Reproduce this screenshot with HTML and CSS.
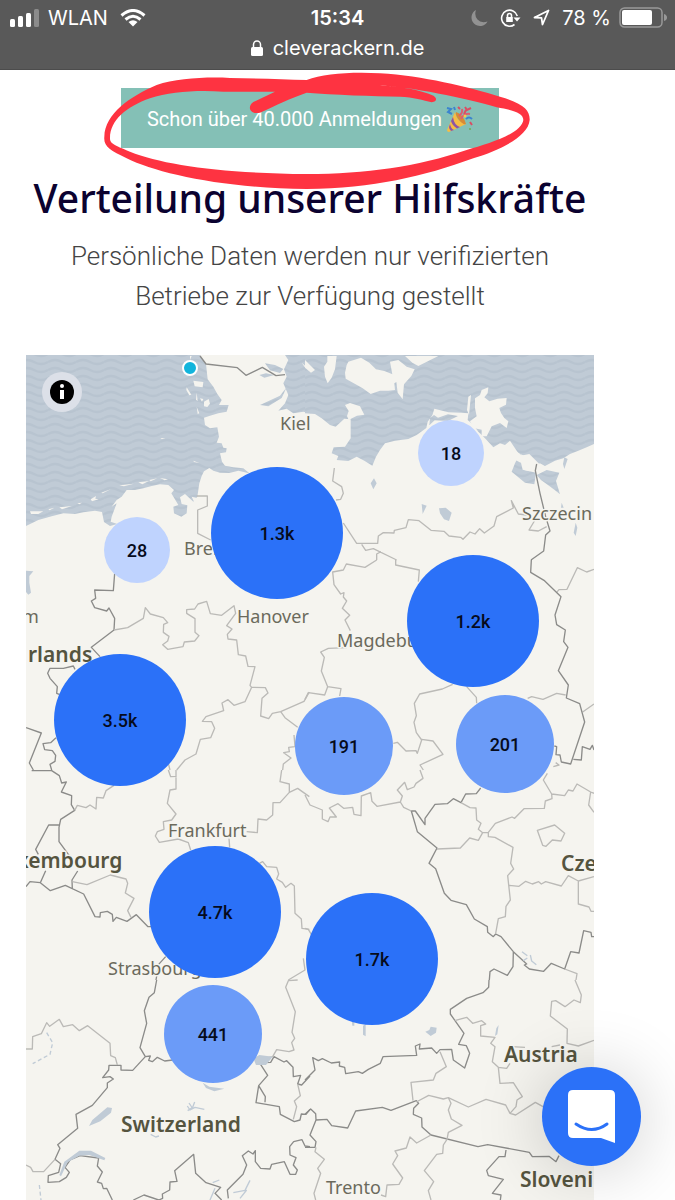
FILE: index.html
```html
<!doctype html>
<html lang="de">
  <head>
    <meta charset="UTF-8" />
    <meta name="viewport" content="width=device-width, initial-scale=1.0" />
    <title>cleverackern.de</title>
    <link rel="stylesheet" href="styles.css">
  </head>
  <body>
    <header class="phone-bar">
      <div class="status">
        <div class="status-left">
          <svg width="30" height="18" viewBox="0 0 30 18" fill="#fff">
            <rect x="0" y="10" width="5" height="8" rx="1.5" />
            <rect x="8" y="7" width="5" height="11" rx="1.5" />
            <rect x="16" y="4" width="5" height="14" rx="1.5" />
            <rect x="24" y="0" width="5" height="18" rx="1.5" opacity=".3" />
          </svg>
          <span>WLAN</span>
          <svg class="wifi" width="26" height="18" viewBox="0 0 26 18" fill="none" stroke="#fff" stroke-width="3">
            <path d="M1.5 6.5Q13-3.500 24.500 6.500M5.500 10.500Q13 4 20.500 10.500" />
            <path d="M8.500 13Q13 9.500 17.500 13L13 17.500z" fill="#fff" stroke="none" />
          </svg>
        </div>
        <span class="clock">15:34</span>
        <div class="status-right">
          <svg width="17" height="18" viewBox="0 0 17 18" fill="#929292">
            <path d="M5 1A8.500 8.500 0 1 0 16.500 12.500Q10 14.500 6.500 10.500T5 1z" />
          </svg>
          <svg class="lock-icon" width="21" height="20" viewBox="0 0 21 20" fill="none" stroke="#fff" stroke-width="1.600">
            <path d="M14.500 16.500A8 8 0 1 1 17.300 8" />
            <path d="M13.500 9.500h7l-3.500 4z" fill="#fff" stroke="none" />
            <path d="M6.200 9h6.600v5H6.200z" fill="#fff" stroke="none" />
            <path d="M7.500 9V7.500a2 2 0 0 1 4 0V9" />
          </svg>
          <svg class="arrow-icon" width="17" height="17" viewBox="0 0 17 17" fill="none" stroke="#fff" stroke-width="1.800" stroke-linejoin="round">
            <path d="M1.500 8.500 15.500 1.500 9.500 15.500 8.500 8.800z" />
          </svg>
          <span>78 %</span>
          <svg class="battery" width="48" height="21" viewBox="0 0 48 21">
            <rect x="1" y="1" width="42" height="19" rx="4.500" fill="none" stroke="#999" stroke-width="1.500" />
            <rect x="3" y="3" width="30" height="15" rx="2" fill="#fff" />
            <path d="M45 7v7q3-1 3-3.500T45 7z" fill="#999" />
          </svg>
        </div>
      </div>
      <div class="address">
        <svg width="12" height="16" viewBox="0 0 12 16">
          <rect y="7" width="12" height="9" rx="1.500" fill="#fff" />
          <path d="M2.500 8V4.500a3.500 3.500 0 0 1 7 0V8" fill="none" stroke="#fff" stroke-width="1.500" />
        </svg>
        <span>cleverackern.de</span>
      </div>
    </header>

    <main>
      <a class="banner" href="#karte">
        <span>Schon über 40.000 Anmeldungen</span>
        <svg width="27" height="27" viewBox="0 0 27 27">
          <path d="M9 6 1 24q0 2 2 2l17-8Q11 16 9 6z" fill="#f6bd45" />
          <path d="M7 11q1 8 7 10l-3 1.500Q6 19 5 15zM4 18q1 5 4 6l-3 1q-2-2-2-4z" fill="#8d55a5" />
          <path d="M10 6q7 2 10 12-3 1-7-4T10 6z" fill="#d88b35" />
          <path d="M13 10q4-3 3-7M15 13q3-6 9-5" fill="none" stroke="#dd5c72" stroke-width="2" />
          <path d="M1 2l4 1-3 3 4 2M20 13q3-3 6 0M8 1l1 3" fill="none" stroke="#3b84cf" stroke-width="2" />
          <path d="M12 1l2 2M19 1l2 3 4-2M24 16l2 3M20 4l-2 4" fill="none" stroke="#d94e64" stroke-width="2" />
          <circle cx="19" cy="10" r="1.500" fill="#f4cf4c" />
          <circle cx="24" cy="23" r="1" fill="#70ad55" />
        </svg>
        <svg class="scribble" width="450" height="150" viewBox="0 0 1350 450">
          <path fill="#fe3341" fill-rule="evenodd" d="M43 200C45 130 120 80 200 45C260 25 350 20 420 24C500 25 580 28 650 30C700 12 780 5 870 10C1000 18 1130 50 1230 80C1300 100 1320 120 1319 150C1315 200 1230 240 1150 265C1000 320 850 355 650 357C400 355 200 310 110 265C60 240 40 230 43 200z
            M60 205C60 150 110 110 180 85C240 65 320 60 400 65L555 65L490 96C470 110 480 135 510 128C560 105 600 85 650 68C730 75 850 78 930 80C970 82 1000 90 1025 97C1045 95 1040 80 1025 75C980 55 900 47 860 45C960 50 1130 85 1220 112C1270 120 1300 130 1300 150C1295 190 1200 220 1130 240C980 290 830 312 650 312C400 310 220 285 120 245C70 225 60 220 60 205z" />
        </svg>
      </a>
      <h1>Verteilung unserer Hilfskräfte</h1>
      <p class="subtitle">Persönliche Daten werden nur verifizierten Betriebe zur Verfügung gestellt</p>

      <section class="map" id="karte">
        <svg class="map-base" width="568" height="845" viewBox="0 0 568 845">
          <defs>
            <pattern id="waves" width="84" height="24" patternUnits="userSpaceOnUse">
              <rect width="84" height="24" fill="#c0cbd6" />
              <path d="M0 12Q21 0 42 12T84 12" fill="none" stroke="#b8c4d0" stroke-width="7" />
            </pattern>
          </defs>

          <!-- north sea, schleswig-holstein -->
          <g transform="translate(-6 -5) scale(.333333)">
            <path class="sea" d="M18 15H540L558 42 563 88 580 110 592 132 605 150 597 165 626 165 620 185 595 190 570 197 552 203 555 225 570 235 592 232 597 260 590 278 605 280 610 293 620 295 618 307 600 310 606 335 615 347 640 352 670 355 688 370 655 362 628 369 600 368 580 362 568 354 552 364 545 378 538 400 532 440 520 455 495 432 480 442 485 462 502 466 500 490 484 500 462 490 460 470 475 465 454 430 462 420 445 405 420 403 395 408 370 415 345 420 320 420 305 440 290 450 275 470 290 460 275 500 272 515 292 522 270 528 252 516 246 486 225 482 190 487 165 492 130 490 95 499 55 510 18 528z" />
            <path class="sea" d="M795 15H873V190L850 185 820 190 800 176 775 182 795 160 805 135 790 100 800 80 792 58 805 30z" />
            <path class="sea" d="M735 40l30 5 25 12-10 12-30-8zM738 70l25 5-30 8-15-8zM720 165l60-28 20-25-15 32-40 25z" />
            <path class="land" d="M520 92l30 4-2 16-24-3zM500 112l14 22-6 2-9-16zM530 128l3 25-5-4zM552 155l14-8 4 14-8 10-10-2zM540 145l10 2-4 8zM530 170l8 20-5 2zM510 18l5 0-5 12zM845 38l25 22-8 2zM30 484l40 0-15 8-22 0zM85 478l18-5-14 8zM118 472l38-4-30 10zM172 460l14-2-8 5zM212 448l16-10-2 8 10 2-20 6zM244 428l28-10-24 12zM298 406l44-5-30 8zM355 397l32-4-20 10zM388 390l24-5-20 9zM420 384l24 4-10 3zM520 332l18 7-16-3zM421 264l15 0-10 3zM515 440l20 5 10 15-8 12-14-15z" />
            <path class="border" d="M540 18L558 42 652 53 678 76 727 52 768 77 795 74" />
            <path class="state" d="M530 438H562V468L533 480V550L572 570" />
          </g>

          <!-- baltic coast -->
          <g transform="translate(279 -5) scale(.333333)">
            <path class="sea" d="M0 15H867V282L845 292 820 302 795 312 775 325 750 332 720 348 705 340 690 345 665 320 640 310 615 272 600 285 585 280 565 292 540 265 520 245 505 225 488 210 490 190 470 188 430 187 388 176 382 196 368 215 364 234 335 255 310 267 270 272 240 280 225 300 213 320 202 347 178 332 155 320 130 333 95 330 100 318 80 310 86 292 120 290 137 265 137 208 118 206 92 230 75 225 50 205 30 192 0 190z" />
            <path class="land" d="M125 45l5-10 38-12 25 15 20 20 25 5 30 12 25-10-10 25-15 10 2 20-20 2-25 0-28 10-25-18-50-28-2-18zM255 35l25-5 25 20 24 8-10 20-22 25-4 45-15-20-5-40-10-10zM95 18l-5 40-10 25-12 17-8-20-3-30 10-15 0-17zM300 18h100l-60 30-18-10zM0 30l30 30-12 8-18-15zM120 165l15-6 30 10 13 25-22 3-15 8-10 5-5-12 5-15zM510 145l15-10 5-15 20-8-2 18-10 12 15 12 25-8 27-2-2 20-20 10 5 15 10 15 12 10-5 20-20-15-25 10-15 30-15 0 0-20-25-5-10-20 20-15-5-25zM490 140l8-5-6 60-6-15z" />
            <path class="sea" d="M620 365l10-25 15-30 18 30-5 20 35 8-5 35-28-5zM695 375l30-15 38 8-10 25 12 40-12-10-20-15-25-18zM375 205l12-10 12 8 30-10 30 5-30 15-40-2-16 15z" />
            <path class="lake-area" d="M778 322l10 5-10 30-4-15zM197 400l10-15 8 15-10 18zM350 462l15 5-12 25zM402 475l20-2 18 15-8 25-15-5-12-18zM770 458l6 15-8 0zM812 518l5 15-5 25-6-10z" />
            <path class="land" d="M630 300l25 20-8 18-20-10zM643 318l30-6 30 30-30 22-20-5z" />
            <path class="state" d="M88 354L83 393 110 410 115 430 107 448 93 450M115 519L155 580H218L220 558 235 548 267 549 268 541 303 533 310 509 342 512 378 541 417 544 432 558 467 562 474 568 495 546 510 552 524 536 538 549 567 528 575 500 625 474 619 452 640 492 665 495M690 510L672 540 700 543 725 530M170 583L182 601 205 596 275 630M215 630L215 612 228 605" />
            <path class="border" d="M695 342L691 362 705 430 722 500 735 543 722 555 716 603 678 630" />
          </g>

          <!-- netherlands, nrw, hanover -->
          <g transform="translate(-6 205) scale(.333333)">
            <path class="lake-area" d="M18 32l22 2-12 14 0 20 5 30-8 6-7-8z" />
            <path class="border" d="M284 40L280 92 224 90 227 115 214 123 224 143 260 153 267 144 284 175 282 210 214 262 240 290M165 328L160 318 130 325 90 325 83 340 90 355 112 380 110 400 118 403M18 503L64 519 28 609 40 630M108 533L92 548 69 551 74 569 97 572 107 586 105 604 90 613 95 630" />
            <path class="state" d="M282 210L323 203 370 175 376 143 391 162 430 173 443 188 431 193 430 217 447 229 443 243 428 254 443 268 489 260 493 246 524 243 537 227 525 217 525 176 500 160 500 149 524 147 534 132 560 124 571 161 605 166 642 137 647 160 620 197 636 207 622 223 624 237 650 240 655 284 677 288 684 319 705 320 690 376 695 382 736 383 744 399 726 415 722 468 746 476 757 460 782 455 795 473 833 502M695 382L675 425 642 436 624 419 606 429 611 452 558 470 547 484 575 485 584 505 572 533 541 538 528 582 495 600 470 630M782 455L852 424 868 396M445 610L450 630M822 525L825 560 806 562 808 575 791 578 813 594 790 612 788 630" />
          </g>

          <!-- magdeburg, leipzig, polish border -->
          <g transform="translate(279 205) scale(.333333)">
            <path class="state" d="M215 0L180 22 124 12 115 30 83 36 87 74 107 102 117 98 115 111 125 123 112 145 134 166 120 180 136 212M272 0V15L343 30 340 65M125 263L70 265 47 276 58 292 49 333 68 380 59 405 10 398 0 418M68 380L108 386 104 408M443 373L412 387 344 402 328 430 334 467 327 487 334 518 350 540 337 580 333 572 303 573 277 547 265 550M350 538L384 543 414 583 345 615 355 630M485 380L514 412 515 430M668 415L680 410 714 418 755 400 782 405M755 97L762 89 786 88 817 23 845 36 867 28M833 456L867 432M752 608L762 615 745 620" />
            <path class="border" d="M679 0L677 37 717 61 768 110 750 165 755 194 781 210 776 245 789 262 760 332 790 375 784 414 824 431 839 486 797 612 769 606 765 585 753 584 755 560 748 558M805 598L829 600 832 560 855 568 862 556 867 570" />
          </g>

          <!-- luxembourg, frankfurt, strasbourg -->
          <g transform="translate(-6 415) scale(.333333)">
            <path class="border" d="M35 2H95L118 17 125 39 139 36 124 66 155 77 154 104 164 121 122 148 117 172 117 215 150 260M117 165H86L47 238 55 253M77 302L61 338 30 335 18 350M61 338L91 362 136 346 191 372 225 440 240 441 241 428 262 424 277 433 279 454 289 442 321 454 349 434 384 470 393 470M173 303L156 330 157 358M437 560L416 583 408 630" />
            <path class="state" d="M164 121L172 106 198 113 210 105 228 117 230 82 250 84 258 62 282 46M445 0L452 20 470 19M468 0V57L450 60 442 100 468 132 455 150 430 155 432 178 412 185 406 198 418 217 475 207 505 218 512 240M627 205L629 232M157 335L201 344 271 315 318 327 323 340 316 369 342 385 323 422 333 442M785 0L780 35 808 42V67L833 55 868 80M808 67L780 98 759 98 758 135 740 150 714 147 712 188 680 185M718 280L728 275 740 290 770 292 776 312 770 327 787 337 797 352 813 340 823 348 825 430 844 447 846 475 868 478M850 565L855 600 805 630" />
          </g>

          <!-- bohemia -->
          <g transform="translate(279 415) scale(.333333)">
            <path class="border" d="M527 54L514 71 482 72 468 98 445 86 427 101 390 103 360 145 360 164 331 123H319L337 185 396 234 372 280 392 296 418 370 438 391 484 404 508 447 547 470 548 487 565 500 572 492 588 500 625 545 665 582 658 585 673 597 716 604 739 580 779 597 797 545 822 549 836 482 858 487 860 500 867 500M625 545L624 590 607 616 567 597 555 605 553 630" />
            <path class="state" d="M345 0L354 25 333 40 327 51 307 59 299 37 277 60 292 78 286 96 216 109 201 94 197 68 169 78 168 137 147 133 143 112 116 115 99 101 73 114 94 141H75L69 155 52 147V120L15 105 0 75M286 96L296 112 319 123M468 98L495 113 513 114 515 150 528 160 520 178 533 188 520 211 494 204 466 234 396 237M533 188L550 187 571 160 621 141 629 145 657 116 718 115 721 93 741 86 740 72 779 77 790 60 804 63 816 42 857 66 867 70M740 72L715 30 727 10M857 66L851 105 867 127M697 181L749 165 779 190 768 213 742 210 723 229 713 226zM550 187V200L570 202 624 232 617 280 626 297 608 317 616 390 603 409 601 440 580 446 572 490M613 346L642 349 662 334 682 342 701 335 709 342 722 335 769 348 790 317 820 333 867 320M820 333V402L852 411 858 424H867M779 597L816 611 813 630M0 475L10 478 20 495" />
            <path class="lake" d="M651 545l16 12M655 572l12-8M676 555l4 18 14 11" />
          </g>

          <!-- switzerland -->
          <g transform="translate(-6 625) scale(.333333)">
            <path class="border" d="M410 0L403 38 387 52 373 92 380 130 360 203 376 230 338 271 303 270V256H267L266 270 248 293 270 290 280 297 262 309V323L217 376 168 403 173 445 113 494 120 505 105 538 122 551 116 577 85 587 84 607 118 605 139 592 148 577 135 562 150 540 180 527 236 534 232 558 247 576 232 606 245 610 250 626 260 625 277 660M376 230L391 228 386 241 397 245 412 232 434 243 458 240M710 235L743 286 716 317 708 368 778 380 781 403 823 425 840 420 844 402 858 403 870 388M716 317L736 350 735 367M730 248L752 247 762 230 792 246 800 242 819 262 820 290 842 286 833 312 845 315 870 288M340 660L372 645 416 660 428 655 427 642 449 630 450 606 471 604 464 572 521 523 527 580 558 608 602 622 585 640 605 660M625 655L622 630 669 583 680 555 667 527 685 513 699 522 706 512V545L722 565 750 567 755 553 793 545 810 583H827L832 570 820 555 828 533 810 525 809 500 821 485 846 479 855 498 870 500" />
            <path class="state" d="M18 207H37L38 170 64 161 80 128 89 139 118 118 130 140 158 134 178 152 203 137 270 190 272 227 286 233 292 255M18 555L32 562 39 575H71L105 538M833 0L805 2 797 22 826 95 816 157 824 175 815 188 822 210 807 215 770 209 758 230 722 237M833 312L841 347 823 363 830 380 820 418" />
            <path class="lake-area" d="M207 438l10-18 45-38 14 2-3 14-32 26zM118 585l15-40 45-33 35 0 43 22-3 7-45-16-30 2-35 20-20 42zM700 235l18-10 40 5-20 25-30 0zM548 308l20 12 45 6-30 8-25-10z" />
            <path class="lake" d="M502 378l8 12 15-8 28 6M507 369l10 15M524 366l-6 16-15 10M392 463l15 8 10-3M598 600l-20 8M690 601l-15 30-35 7M570 660l15-35M680 630l-20 25" />
            <path class="lake" stroke-dasharray="12 8" d="M80 158l18 30-8 35-52 28M58 615l5 45" />
          </g>

          <!-- austria -->
          <g transform="translate(279 625) scale(.333333)">
            <path class="border" d="M552 0L551 22 534 38 485 55 436 88V102L477 160 461 193 484 197 494 220 479 264 445 240 440 208 405 209 395 220 380 204 343 207 345 192 331 198 335 226 234 230 226 250 190 268 172 280 160 275 122 281 119 262 103 258 104 246 79 249 52 236 40 242 23 233 30 270 0 300M0 403L17 387 32 401 33 420 66 418 80 437 128 444 152 393 232 382 258 391 334 362 341 370 326 385 325 403 350 414 351 441 378 465 519 500 548 494 673 517 682 530 732 529 753 545 762 527M33 420L15 465 33 485 30 502H0M603 510L600 530 582 530 545 571 550 587 595 598 562 640 588 645 586 660" />
            <path class="state" d="M449 122L485 112 503 130 530 122 542 132 527 137V168L570 172 557 190 570 200 562 245 580 262 585 310 625 308 652 350 636 360 633 380 615 400 632 405 691 367 714 380M615 400L602 375 543 358 490 381 430 353 415 357 371 346 334 366M430 353L438 370 430 390 439 417 471 436 430 457 426 478 415 495 413 520 395 523 358 572 386 605 370 632 378 660M405 215L424 260 393 280 385 300 318 307 324 362M580 262L605 265 615 250M378 465L335 489 315 471 304 504 270 513 278 527 263 552 293 594 282 613 246 615 242 650 228 645M33 502L30 515 58 538 38 565 47 580 27 640 32 660M810 0L829 45 826 68 807 60 780 80 752 62 740 64 736 108 787 147 786 190 820 198 867 181M620 200L660 202M740 200L765 195" />
            <path class="lake-area" d="M361 155l12-5 4-10 18 3-2 15-16 10zM140 120l8 5 0 12-6 0zM174 137l8-4 0 36-8-5zM574 145l7-10-4 28-7 5z" />
          </g>

          <g class="city">
            <text x="254" y="75">Kiel</text>
            <text x="158" y="200">Brem</text>
            <text x="496" y="165">Szczecin</text>
            <text x="211" y="268">Hanover</text>
            <text x="311" y="292">Magdeburg</text>
            <text x="-4" y="268">m</text>
            <text x="142" y="482">Frankfurt</text>
            <text x="82" y="620">Strasbourg</text>
            <text x="300" y="839">Trento</text>
          </g>
          <g class="country">
            <text x="2" y="307">rlands</text>
            <text x="-9" y="513">xembourg</text>
            <text x="535" y="516">Cze</text>
            <text x="478" y="707">Austria</text>
            <text x="95" y="777">Switzerland</text>
            <text x="494" y="832">Sloveni</text>
          </g>
        </svg>

        <span class="location"></span>
        <button class="info" aria-label="Info">
          <svg width="24" height="24" viewBox="0 0 24 24">
            <circle cx="12" cy="12" r="12" />
            <circle cx="12" cy="6" r="2" fill="#fff" />
            <path d="M10 10H14V19H10z" fill="#fff" />
          </svg>
        </button>

        <button class="cluster small emden">28</button>
        <button class="cluster small rostock">18</button>
        <button class="cluster large hamburg">1.3k</button>
        <button class="cluster large berlin">1.2k</button>
        <button class="cluster large koeln">3.5k</button>
        <button class="cluster medium erfurt">191</button>
        <button class="cluster medium dresden">201</button>
        <button class="cluster large mannheim">4.7k</button>
        <button class="cluster large muenchen">1.7k</button>
        <button class="cluster medium freiburg">441</button>
      </section>
    </main>

    <button class="chat" aria-label="Chat">
      <svg width="48" height="54" viewBox="0 0 48 54">
        <path d="M5 0H42Q47 0 47 5V53L33 48H5Q0 48 0 43V5Q0 0 5 0z" fill="#fff" />
        <path d="M8 34Q24 45 39 34" fill="none" stroke="#2b71f8" stroke-width="3" stroke-linecap="round" />
      </svg>
    </button>
  </body>
</html>
```
FILE: styles.css
```css
* {
  margin: 0;
  padding: 0;
  box-sizing: border-box;
}

body {
  display: flex;
  flex-direction: column;
  min-height: 100vh;
  background: #fff;
  font-family: Roboto, "Liberation Sans", sans-serif;
}

button {
  border: none;
  cursor: pointer;
}

/* browser bar */
.phone-bar {
  height: 70px;
  background: #595959;
  border-bottom: 1px solid #4c4c4c;
  color: #fff;
  font-family: Inter, "Liberation Sans", sans-serif;
  font-size: 20px;
}

.status {
  display: grid;
  grid-template-columns: 1fr auto 1fr;
  align-items: center;
  height: 35px;
  padding: 0 10px;
}

.status-left,
.status-right {
  display: flex;
  align-items: center;
  gap: 8px;
}

.status-right {
  justify-content: flex-end;
  margin-right: -2px;
}

.wifi,
.arrow-icon {
  margin: 0 4px;
}

.lock-icon {
  margin-left: 4px;
}

.clock {
  font-weight: 600;
}

.address {
  display: flex;
  align-items: center;
  justify-content: center;
  gap: 10px;
  height: 26px;
}

/* content */
main {
  display: flex;
  flex: 1;
  flex-direction: column;
  align-items: center;
  margin: 18px 81px 0 26px;
}

.banner {
  position: relative;
  display: flex;
  align-items: center;
  gap: 4px;
  height: 60px;
  padding: 2px 26px 0;
  background: #84c0b6;
  color: #fff;
  font-size: 20px;
  text-decoration: none;
}

.scribble {
  position: absolute;
  top: -18px;
  left: -31px;
  pointer-events: none;
}

h1 {
  margin-top: 25px;
  color: #0b0230;
  font-family: "Noto Sans", sans-serif;
  font-size: 39px;
  font-weight: 500;
  line-height: 50px;
  white-space: nowrap;
}

.subtitle {
  max-width: 520px;
  margin: 13px 0 39px;
  color: #444;
  font-size: 26px;
  font-weight: 300;
  line-height: 40px;
  text-align: center;
}

/* map */
.map {
  position: relative;
  flex: 1;
  width: 100%;
  min-height: 600px;
  overflow: hidden;
  background: #f5f4ef;
}

.map-base {
  position: absolute;
  top: 0;
  left: 0;
}

.sea {
  fill: url(#waves);
}

.land {
  fill: #f5f4ef;
}

.lake-area {
  fill: #c0cbd6;
}

.border,
.state,
.lake {
  fill: none;
  stroke-width: 4;
  stroke-linejoin: round;
}

.border {
  stroke: #8b8b89;
}

.state {
  stroke: #bbbab7;
}

.lake {
  stroke: #c0cbd6;
}

.city,
.country {
  font-family: "Noto Sans", sans-serif;
  stroke: #f5f4ef;
  stroke-width: 3px;
  stroke-linejoin: round;
  paint-order: stroke;
}

.city {
  fill: #6b6a5c;
  font-size: 18px;
}

.country {
  fill: #55543f;
  font-size: 21px;
  font-weight: 600;
}

.location {
  position: absolute;
  top: 5px;
  left: 156px;
  width: 16px;
  height: 16px;
  border: 2px solid #fff;
  border-radius: 50%;
  background: #12b4dc;
}

.info {
  position: absolute;
  top: 17px;
  left: 16px;
  display: flex;
  align-items: center;
  justify-content: center;
  width: 40px;
  height: 40px;
  border-radius: 50%;
  background: #dce0e8;
}

.cluster {
  position: absolute;
  border-radius: 50%;
  color: #060b1c;
  font-family: Roboto, sans-serif;
  font-size: 18px;
  font-weight: 500;
  transform: translate(-50%, -50%);
}

.small {
  width: 66px;
  height: 66px;
  background: #bfd3fe;
}

.medium {
  width: 98px;
  height: 98px;
  background: #6b9bf8;
}

.large {
  width: 132px;
  height: 132px;
  background: #2b71f8;
}

.emden {
  left: 111px;
  top: 195px;
}

.rostock {
  left: 425px;
  top: 98px;
}

.hamburg {
  left: 251px;
  top: 178px;
}

.berlin {
  left: 447px;
  top: 266px;
}

.koeln {
  left: 94px;
  top: 365px;
}

.erfurt {
  left: 318px;
  top: 391px;
}

.dresden {
  left: 479px;
  top: 389px;
}

.mannheim {
  left: 189px;
  top: 557px;
}

.muenchen {
  left: 346px;
  top: 604px;
}

.freiburg {
  left: 187px;
  top: 679px;
}

.chat {
  position: fixed;
  right: 34px;
  bottom: 34px;
  display: flex;
  align-items: center;
  justify-content: center;
  width: 99px;
  height: 99px;
  border-radius: 50%;
  background: #2b71f8;
  box-shadow: 0 4px 70px rgba(0, 0, 0, 0.2);
}
```
